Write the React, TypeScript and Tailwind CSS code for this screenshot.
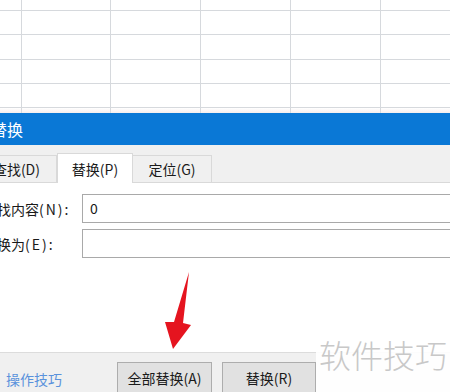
import React from "react";

const cols = [21, 88, 89, 89, 89, 74];
const rows = [10, 23, 24, 23, 23];

function Sheet() {
  return (
    <div className="h-[113px] flex flex-col overflow-hidden">
      {rows.map((h, i) => (
        <div key={i} className="flex border-b border-[#d6d9dd]" style={{ height: h + 1 }}>
          {cols.map((w, j) => (
            <div key={j} className="shrink-0 border-r border-[#d6d9dd]" style={{ width: w + 1 }} />
          ))}
        </div>
      ))}
      <div className="flex flex-1 bg-gradient-to-b from-white to-[#f6eeee]">
        {cols.map((w, j) => (
          <div key={j} className="shrink-0 border-r border-[#d6d9dd]" style={{ width: w + 1 }} />
        ))}
      </div>
    </div>
  );
}

export default function App() {
  return (
    <div
      className="relative w-[450px] h-[392px] overflow-hidden bg-white text-[#1a1a1a]"
      style={{ fontFamily: '"Noto Sans CJK SC", "Noto Sans", sans-serif' }}
    >
      <Sheet />
      {/* title bar */}
      <div className="h-[32px] bg-[#0a78d6] flex items-center">
        <span className="ml-[-9px] text-[16px] text-white leading-none">替换</span>
      </div>
      {/* tabs */}
      <div className="h-[38px] bg-[#f0f0f0] flex items-end">
        <div className="h-[28px] w-[72px] ml-[-15px] shrink-0 border border-[#d9d9d9] flex items-center justify-end pr-[16px] text-[14px] leading-none">
          查找(D)
        </div>
        <div className="h-[30px] w-[76px] shrink-0 bg-white border border-b-0 border-[#d9d9d9] flex items-center justify-center text-[14px] leading-none">
          替换(P)
        </div>
        <div className="h-[28px] w-[79px] shrink-0 border border-l-0 border-[#d9d9d9] flex items-center justify-center text-[14px] leading-none">
          定位(G)
        </div>
        <div className="flex-1 border-b border-[#d9d9d9]" />
      </div>
      {/* content */}
      <div className="h-[169px] bg-white pt-[11px] flex flex-col gap-[6px]">
        <div className="flex items-center h-[29px]">
          <div className="w-[99px] ml-[-17px] shrink-0 text-[14px] leading-none whitespace-nowrap">
            查找内容<span className="tracking-[2px]">(N):</span>
          </div>
          <div className="flex-1 h-[29px] mr-[-10px] border border-[#a9a9a9] bg-white flex items-center pl-[7px] text-[14px]">
            0
          </div>
        </div>
        <div className="flex items-center h-[29px]">
          <div className="w-[99px] ml-[-17px] shrink-0 text-[14px] leading-none whitespace-nowrap">
            替换为<span className="tracking-[2px]">(E):</span>
          </div>
          <div className="flex-1 h-[29px] mr-[-10px] border border-[#a9a9a9] bg-white" />
        </div>
      </div>
      {/* footer */}
      <div className="h-[40px] bg-[#f0f0f0] border-t border-[#dcdcdc] flex items-start">
        <div className="w-[117px] shrink-0 pl-[6px] pt-[19px] text-[14px] leading-none text-[#5a92dc]">操作技巧</div>
        <div className="mt-[9px] h-[32px] w-[95px] shrink-0 bg-[#e1e1e1] border border-[#adadad] flex items-center justify-center text-[14px] leading-none">
          全部替换(A)
        </div>
        <div className="mt-[9px] ml-[10px] h-[32px] w-[94px] shrink-0 bg-[#e1e1e1] border border-[#adadad] flex items-center justify-center text-[14px] leading-none">
          替换(R)
        </div>
      </div>
      {/* watermark */}
      <div className="absolute left-[316px] top-[334px] w-[134px] h-[58px] bg-white/90 flex items-start pt-[4px] pl-[3px]">
        <span className="text-[32px] leading-none text-[#c8c8c8] font-light">软件技巧</span>
      </div>
      {/* arrow */}
      <svg className="absolute left-0 top-0" width="450" height="392" viewBox="0 0 450 392">
        <polygon points="189,272 183,323 191,325 173,349 165,322 174,322" fill="#e5141f" />
      </svg>
    </div>
  );
}
